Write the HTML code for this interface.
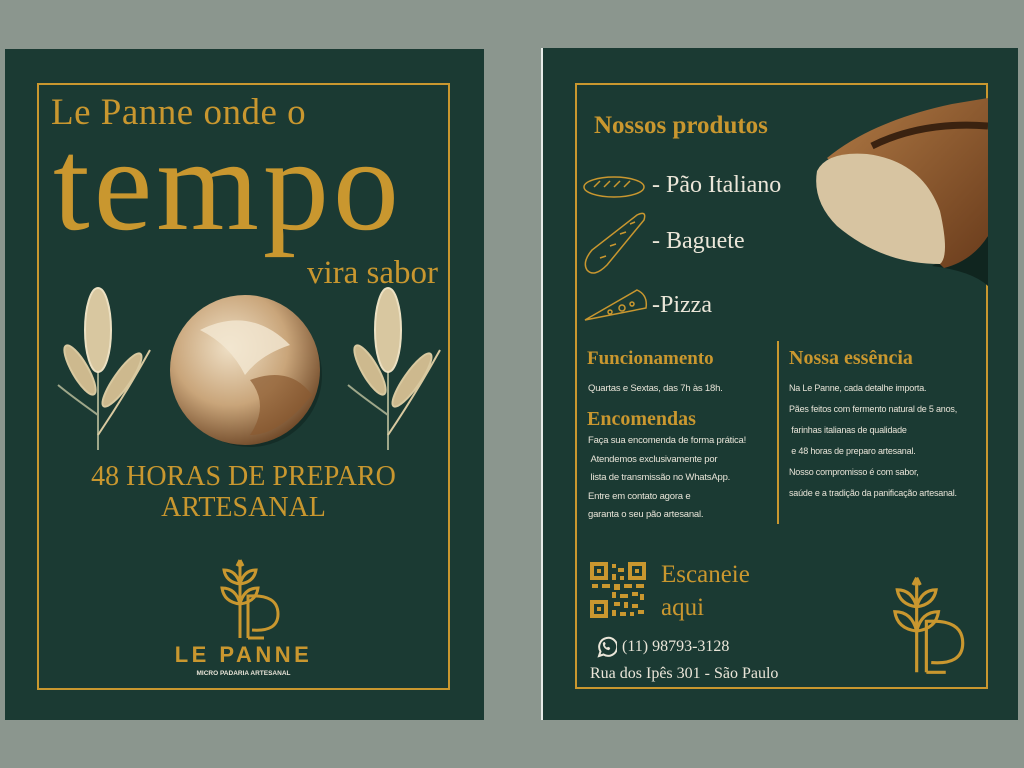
<!DOCTYPE html>
<html><head><meta charset="utf-8"><style>
*{margin:0;padding:0;box-sizing:border-box}
body{width:1024px;height:768px;background:#8b968e;position:relative;overflow:hidden;font-family:"Liberation Serif",serif}
.card{position:absolute;background:#1b3a33}
.a{position:absolute;white-space:nowrap}
.g{color:#c9972f}
.w{color:#ebe6d9}
.hand{font-family:"Liberation Sans",sans-serif;font-size:9.5px;color:#e8e4d8;letter-spacing:-0.2px}
</style></head><body>
<!-- left card -->
<div class="card" style="left:5px;top:49px;width:479px;height:671px"></div>
<div class="a" style="left:37px;top:83px;width:413px;height:607px;border:2px solid #c9972f"></div>
<div class="a g" style="left:51px;top:91px;font-size:37px;letter-spacing:0.5px">Le Panne onde o</div>
<div class="a g" style="left:53px;top:106px;font-size:132px;letter-spacing:4px;line-height:1.2">tempo</div>
<div class="a g" style="left:307px;top:255px;font-size:33px">vira sabor</div>
<svg class="a" style="left:50px;top:285px" width="395" height="175" viewBox="0 0 395 175">
 <defs><radialGradient id="rb" cx="40%" cy="35%" r="70%"><stop offset="0" stop-color="#efe0c6"/><stop offset=".55" stop-color="#c9a57a"/><stop offset="1" stop-color="#6b4424"/></radialGradient></defs>
 <g id="wh" fill="none" stroke="#d9c9a0" stroke-width="2">
  <path d="M48 165 L48 70" stroke="#9fa78a"/>
  <path d="M48 130 Q20 110 8 100" stroke="#9fa78a"/>
  <path d="M48 150 Q75 110 100 65"/>
  <ellipse cx="48" cy="45" rx="13" ry="42" fill="#d8c7a0" stroke="#ece0c2"/>
  <ellipse cx="30" cy="85" rx="8" ry="28" transform="rotate(-30 30 85)" fill="#cdb98e"/>
  <ellipse cx="72" cy="95" rx="8" ry="32" transform="rotate(35 72 95)" fill="#cdb98e"/>
 </g>
 <use href="#wh" transform="translate(290 0)"/>
 <ellipse cx="200" cy="90" rx="72" ry="72" fill="#10251f" opacity=".6"/>
 <circle cx="195" cy="85" r="75" fill="url(#rb)"/>
 <path d="M150 45 Q200 20 240 60 Q210 70 195 90 Q180 60 150 45Z" fill="#f3e7d2" opacity=".8"/>
 <path d="M200 95 Q240 80 262 110 Q230 150 200 150 Q220 120 200 95Z" fill="#8a5a30" opacity=".7"/>
</svg>
<div class="a g" style="left:37px;width:413px;text-align:center;top:461px;font-size:28px;line-height:31px;white-space:normal">48 HORAS DE PREPARO<br>ARTESANAL</div>
<svg class="a" style="left:218px;top:556px" width="66" height="86" viewBox="0 0 66 86" fill="none" stroke="#c9972f" stroke-width="3">
 <path d="M22 4 L22 82 M22 4 L19 10 M22 4 L25 10"/>
 <path d="M22 28 Q8 26 6 14 Q18 14 22 28 Q26 14 38 14 Q36 26 22 28Z"/>
 <path d="M22 48 Q6 46 4 32 Q18 32 22 48 Q26 32 40 32 Q38 46 22 48Z"/>
 <path d="M30 82 L30 40 Q60 38 60 58 Q60 76 34 74"/>
 <path d="M30 82 L46 82"/>
</svg>
<div class="a g" style="left:37px;width:413px;text-align:center;top:642px;font-family:'Liberation Sans',sans-serif;font-size:22px;font-weight:bold;letter-spacing:3.5px">LE PANNE</div>
<div class="a" style="left:37px;width:413px;text-align:center;top:670px;font-family:'Liberation Sans',sans-serif;font-size:6.5px;font-weight:bold;color:#e8e4d8">MICRO PADARIA ARTESANAL</div>

<!-- right card -->
<div class="card" style="left:541px;top:48px;width:477px;height:672px;border-left:2px solid #e7ebe8"></div>
<div class="a" style="left:575px;top:83px;width:413px;height:606px;border:2px solid #c9972f"></div>
<svg class="a" style="left:812px;top:96px" width="176" height="195" viewBox="0 0 176 195">
 <defs><linearGradient id="cr" x1="0" y1="0" x2="1" y2="1"><stop offset="0" stop-color="#b07a45"/><stop offset="1" stop-color="#6a3c1c"/></linearGradient></defs>
 <path d="M120 170 Q160 175 176 190 L176 140Z" fill="#10251f"/>
 <path d="M15 62 Q60 25 140 8 L176 2 L176 140 Q160 165 132 172 Z" fill="url(#cr)"/>
 <path d="M60 50 Q110 25 176 30" stroke="#3a2210" stroke-width="7" fill="none"/>
 <path d="M5 75 Q15 55 55 58 Q110 65 128 115 Q138 160 128 168 Q70 168 25 130 Q0 105 5 75Z" fill="#d7c4a1"/>
</svg>
<div class="a g" style="left:594px;top:112px;font-size:25px;font-weight:bold">Nossos produtos</div>
<svg class="a" style="left:582px;top:170px" width="70" height="155" viewBox="0 0 70 155" fill="none" stroke="#c9972f" stroke-width="1.5">
 <ellipse cx="32" cy="17" rx="30" ry="10"/><path d="M12 17 l6 -6 M22 17 l6-6 M32 17 l6-6 M42 17 l6-6"/>
 <path d="M5 100 Q0 92 10 80 L55 45 Q65 40 62 50 L25 95 Q12 108 5 100Z"/><path d="M18 88 l6-2 M28 76 l6-2 M38 64 l6-2 M48 54 l5-2"/>
 <path d="M3 150 L55 120 Q66 125 64 138 Z"/><circle cx="40" cy="138" r="3"/><circle cx="28" cy="142" r="2"/><circle cx="50" cy="134" r="2"/>
</svg>
<div class="a w" style="left:652px;top:172px;font-size:24px">- Pão Italiano</div>
<div class="a w" style="left:652px;top:228px;font-size:24px">- Baguete</div>
<div class="a w" style="left:652px;top:292px;font-size:24px">-Pizza</div>
<div class="a" style="left:777px;top:341px;width:2px;height:183px;background:#c9972f"></div>
<div class="a g" style="left:587px;top:348px;font-size:19px;font-weight:bold">Funcionamento</div>
<div class="a hand" style="left:588px;top:383px">Quartas e Sextas, das 7h às 18h.</div>
<div class="a g" style="left:587px;top:408px;font-size:20px;font-weight:bold">Encomendas</div>
<div class="a hand" style="left:588px;top:432px;line-height:18.5px">Faça sua encomenda de forma prática!<br>&nbsp;Atendemos exclusivamente por<br>&nbsp;lista de transmissão no WhatsApp.<br>Entre em contato agora e<br>garanta o seu pão artesanal.</div>
<div class="a g" style="left:789px;top:347px;font-size:20px;font-weight:bold">Nossa essência</div>
<div class="a hand" style="left:789px;top:378px;line-height:21px;font-size:9px">Na Le Panne, cada detalhe importa.<br>Pães feitos com fermento natural de 5 anos,<br>&nbsp;farinhas italianas de qualidade<br>&nbsp;e 48 horas de preparo artesanal.<br>Nosso compromisso é com sabor,<br>saúde e a tradição da panificação artesanal.</div>
<svg class="a" style="left:590px;top:562px" width="56" height="56" viewBox="0 0 56 56" fill="#c9972f">
 <path d="M0 0h18v18H0z M4 4v10h10V4z M7 7h4v4H7z M38 0h18v18H38z M42 4v10h10V4z M45 7h4v4h-4z M0 38h18v18H0z M4 42v10h10V42z M7 45h4v4H7z"/>
 <path d="M22 2h4v4h-4zM28 6h6v4h-6zM22 12h4v6h-4zM30 14h4v4h-4zM2 22h6v4H2zM12 22h8v4h-8zM24 22h6v6h-6zM34 22h8v4h-8zM46 22h8v4h-8zM22 30h4v6h-4zM30 32h8v4h-8zM42 30h6v4h-6zM50 32h4v6h-4zM24 40h6v4h-6zM34 40h4v6h-4zM42 42h6v4h-6zM22 48h4v6h-4zM30 50h6v4h-6zM40 50h4v4h-4zM48 48h6v4h-6z"/>
</svg>
<div class="a g" style="left:661px;top:558px;font-size:25px;line-height:33px">Escaneie<br>aqui</div>
<svg class="a" style="left:595px;top:636px" width="22" height="22" viewBox="0 0 22 22" fill="none" stroke="#ebe6d9" stroke-width="2">
 <path d="M4 20 L5.5 15.5 A9 9 0 1 1 8.5 18.5 Z"/><path d="M8 7 Q8 13 14 14 L15 12 L13 11 L12 12 Q10 11 9.5 9 L10.5 8 L9.5 6Z" fill="#ebe6d9" stroke-width="0.5"/>
</svg>
<div class="a w" style="left:622px;top:638px;font-size:16px">(11) 98793-3128</div>
<div class="a w" style="left:590px;top:665px;font-size:16px">Rua dos Ipês 301 - São Paulo</div>
<svg class="a" style="left:890px;top:570px" width="80" height="110" viewBox="0 0 66 86" fill="none" stroke="#c9972f" stroke-width="2.6">
 <path d="M22 4 L22 82 M22 4 L19 10 M22 4 L25 10"/>
 <path d="M22 28 Q8 26 6 14 Q18 14 22 28 Q26 14 38 14 Q36 26 22 28Z"/>
 <path d="M22 48 Q6 46 4 32 Q18 32 22 48 Q26 32 40 32 Q38 46 22 48Z"/>
 <path d="M30 82 L30 40 Q60 38 60 58 Q60 76 34 74"/>
 <path d="M30 82 L46 82"/>
</svg>
</body></html>
